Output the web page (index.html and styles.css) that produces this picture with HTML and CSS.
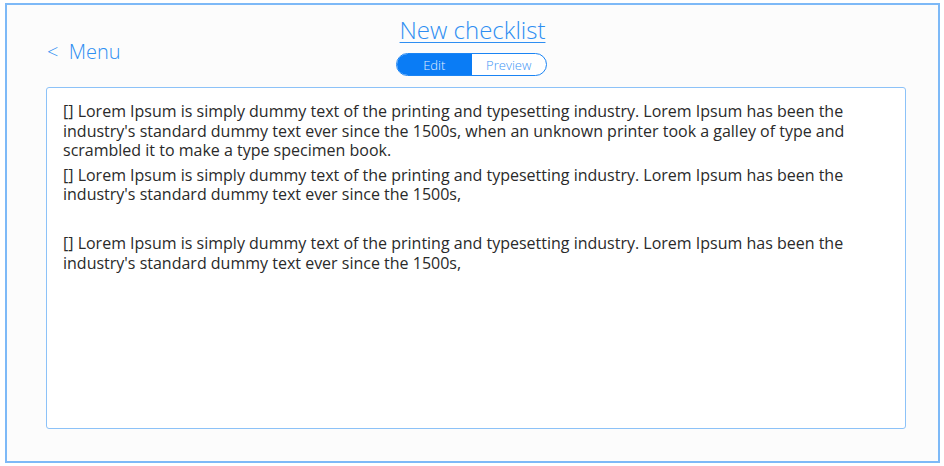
FILE: index.html
```html
<!DOCTYPE html>
<html>
<head>
<meta charset="utf-8">
<link rel="stylesheet" href="styles.css">
</head>
<body>
<div class="frame">
  <header class="header">
    <a class="menu">&lt;&nbsp; Menu</a>
    <div class="center">
      <a class="title">New checklist</a>
      <div class="toggle">
        <span class="tab active">Edit</span>
        <span class="tab">Preview</span>
      </div>
    </div>
    <div></div>
  </header>
  <div class="editor">
    <p>[] Lorem Ipsum is simply dummy text of the printing and typesetting industry. Lorem Ipsum has been the industry's standard dummy text ever since the 1500s, when an unknown printer took a galley of type and scrambled it to make a type specimen book.</p>
    <p>[] Lorem Ipsum is simply dummy text of the printing and typesetting industry. Lorem Ipsum has been the industry's standard dummy text ever since the 1500s,</p>
    <p>&nbsp;</p>
    <p>[] Lorem Ipsum is simply dummy text of the printing and typesetting industry. Lorem Ipsum has been the industry's standard dummy text ever since the 1500s,</p>
  </div>
</div>
</body>
</html>
```
FILE: styles.css
```css
* { box-sizing: border-box; }
html, body { margin: 0; padding: 0; background: #ffffff; }
body { font-family: "Open Sans", "Noto Sans", sans-serif; }
.frame {
  margin: 3px 0 0 5px;
  width: 935px;
  height: 460px;
  border: 2px solid #7db9f7;
  background: #fcfcfc;
  display: flex;
  flex-direction: column;
}
.header {
  height: 82px;
  display: grid;
  grid-template-columns: 1fr auto 1fr;
  align-items: start;
}
.menu {
  margin: 34px 0 0 40px;
  font-size: 20px;
  font-weight: 300;
  color: #2e8ef2;
  line-height: 26px;
}
.center {
  display: flex;
  flex-direction: column;
  align-items: center;
  padding-top: 10px;
}
.title {
  font-size: 24px;
  font-weight: 300;
  color: #2e8ef2;
  text-decoration: underline;
  text-underline-offset: 3px;
  text-decoration-thickness: 1px;
  line-height: 30px;
}
.toggle {
  margin-top: 8px;
  margin-right: 2px;
  display: flex;
  width: 151px;
  height: 23px;
  border: 1px solid #1a84f4;
  border-radius: 12px;
  overflow: hidden;
  background: #ffffff;
}
.tab {
  flex: 1;
  display: flex;
  align-items: center;
  justify-content: center;
  font-size: 13px;
  font-weight: 300;
  color: #3d95f5;
}
.tab.active {
  background: #0a7cf5;
  color: #e2eeff;
}
.editor {
  margin: 0 32px 0 39px;
  height: 342px;
  border: 1px solid #8cc2f8;
  border-radius: 3px;
  background: #ffffff;
  padding: 14px 16px 0 16px;
  font-size: 16px;
  line-height: 19.5px;
  color: #2a2a2a;
}
.editor p { margin: 0 0 5px 0; }
```
